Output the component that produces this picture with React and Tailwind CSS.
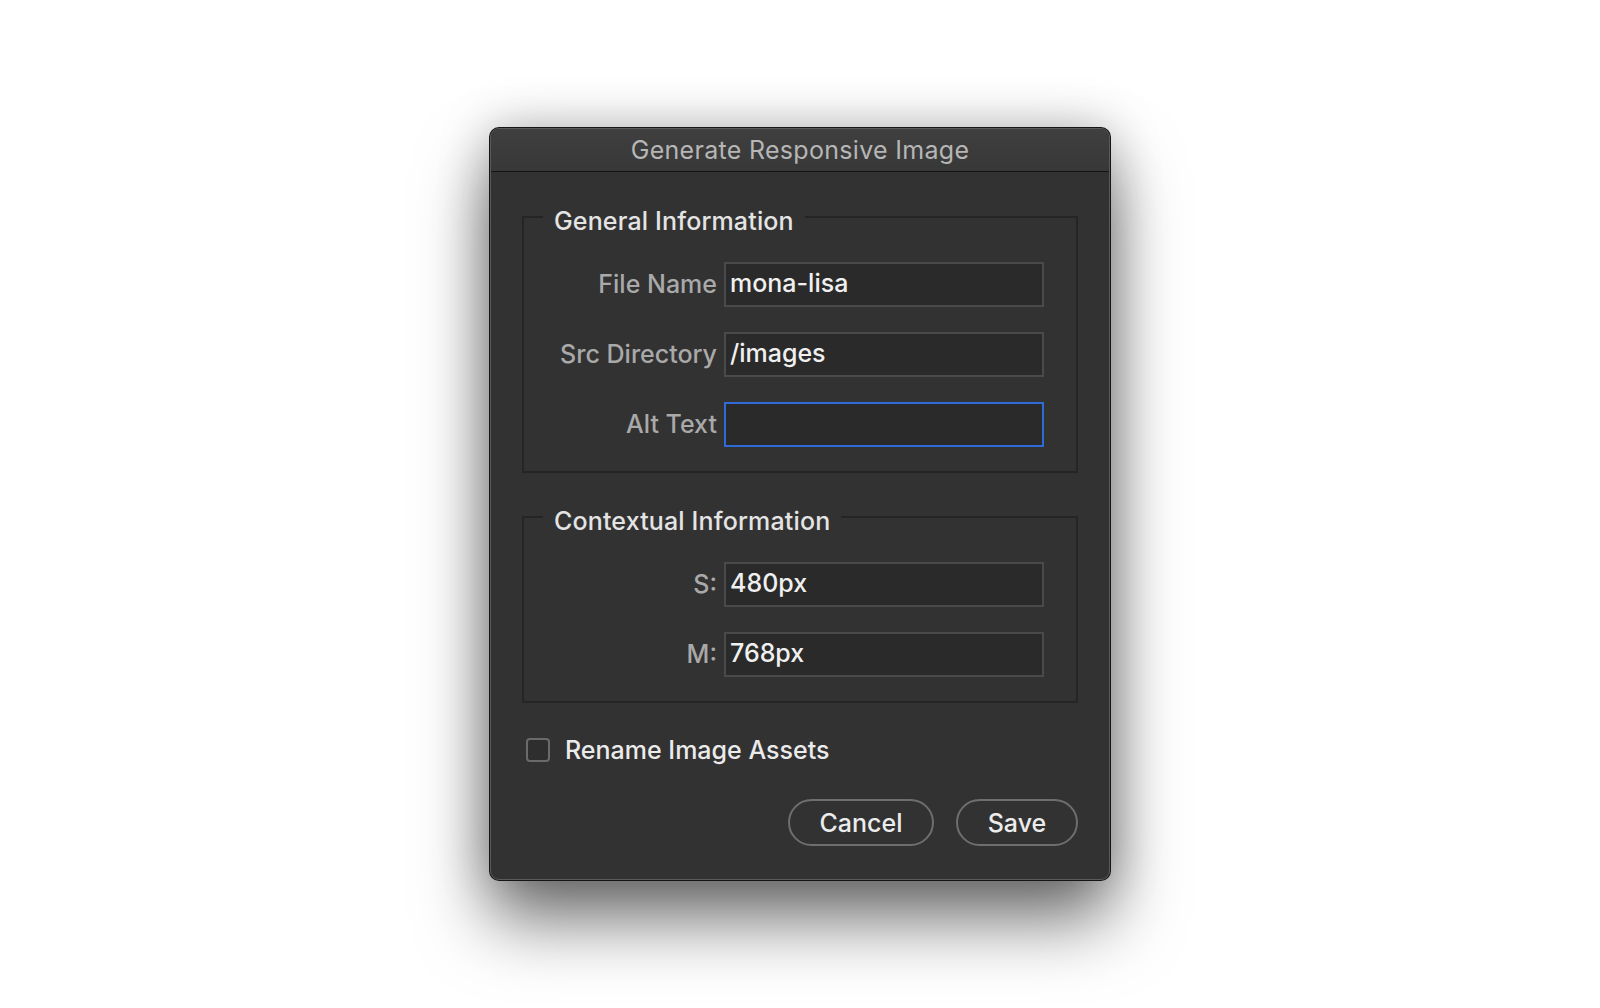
import React from "react";

function Row({ label, value, focused }) {
  return (
    <>
      <div className="h-[45px] leading-[45px] text-right text-[25px] text-[#a9a9a9] whitespace-nowrap">
        {label}
      </div>
      <div
        className={
          focused
            ? "h-[45px] border-2 border-[#2f6ad9] bg-[#2a2a2a] flex items-center pl-[4px] pb-[4px]"
            : "h-[45px] border-2 border-[#4a4a4a] bg-[#2a2a2a] flex items-center pl-[4px] pb-[4px]"
        }
      >
        <span className="text-[25px] leading-[30px] text-[#f0f0f0]">{value}</span>
      </div>
    </>
  );
}

function Group({ title, children, className }) {
  return (
    <fieldset className={"border-2 border-[#252525] m-0 p-0 pb-[24px] " + (className || "")}>
      <legend className="ml-[19px] px-[11px] pt-[8px] text-[25px] leading-[30px] tracking-[0.15px] text-[#e4e4e4] whitespace-nowrap">
        {title}
      </legend>
      <div className="mt-[26px] grid grid-cols-[193px_320px] gap-x-[7px] gap-y-[25px]">
        {children}
      </div>
    </fieldset>
  );
}

export default function App() {
  return (
    <div className="min-h-[1008px] bg-white flex justify-center pt-[128px] font-['Inter','Noto_Sans',sans-serif] font-medium antialiased">
      <div className="w-[620px] h-[752px] rounded-[9px] bg-[#323232] border border-[#5a5a5a] shadow-[0_0_0_1px_#151515,0_40px_70px_rgba(0,0,0,0.55),0_0_50px_rgba(0,0,0,0.25)] overflow-hidden flex flex-col">
        <div className="h-[43px] shrink-0 bg-gradient-to-b from-[#3f3f3f] to-[#383838] border-b border-[#141414] flex items-center justify-center pt-[2px] text-[25px] font-normal tracking-[0.3px] text-[#b6b6b6]">
          Generate Responsive Image
        </div>
        <div className="px-[31px] pt-[26px] flex flex-col">
          <Group title="General Information">
            <Row label="File Name" value="mona-lisa" />
            <Row label="Src Directory" value="/images" />
            <Row label="Alt Text" value="" focused />
          </Group>
          <Group title="Contextual Information" className="mt-[25px]">
            <Row label="S:" value="480px" />
            <Row label="M:" value="768px" />
          </Group>
          <div className="mt-[35px] ml-[4px] flex items-center h-[24px]">
            <div className="w-[24px] h-[24px] rounded-[4px] border-2 border-[#6a6a6a] bg-[#2e2e2e]" />
            <span className="ml-[15px] text-[25px] leading-[24px] text-[#ebebeb]">Rename Image Assets</span>
          </div>
          <div className="mt-[37px] flex justify-end gap-[22px]">
            <button className="w-[146px] h-[47px] rounded-full border-2 border-[#6e6e6e] text-[25px] leading-[30px] text-[#ececec]">
              Cancel
            </button>
            <button className="w-[122px] h-[47px] rounded-full border-2 border-[#6e6e6e] text-[25px] leading-[30px] text-[#ececec]">
              Save
            </button>
          </div>
        </div>
      </div>
    </div>
  );
}
